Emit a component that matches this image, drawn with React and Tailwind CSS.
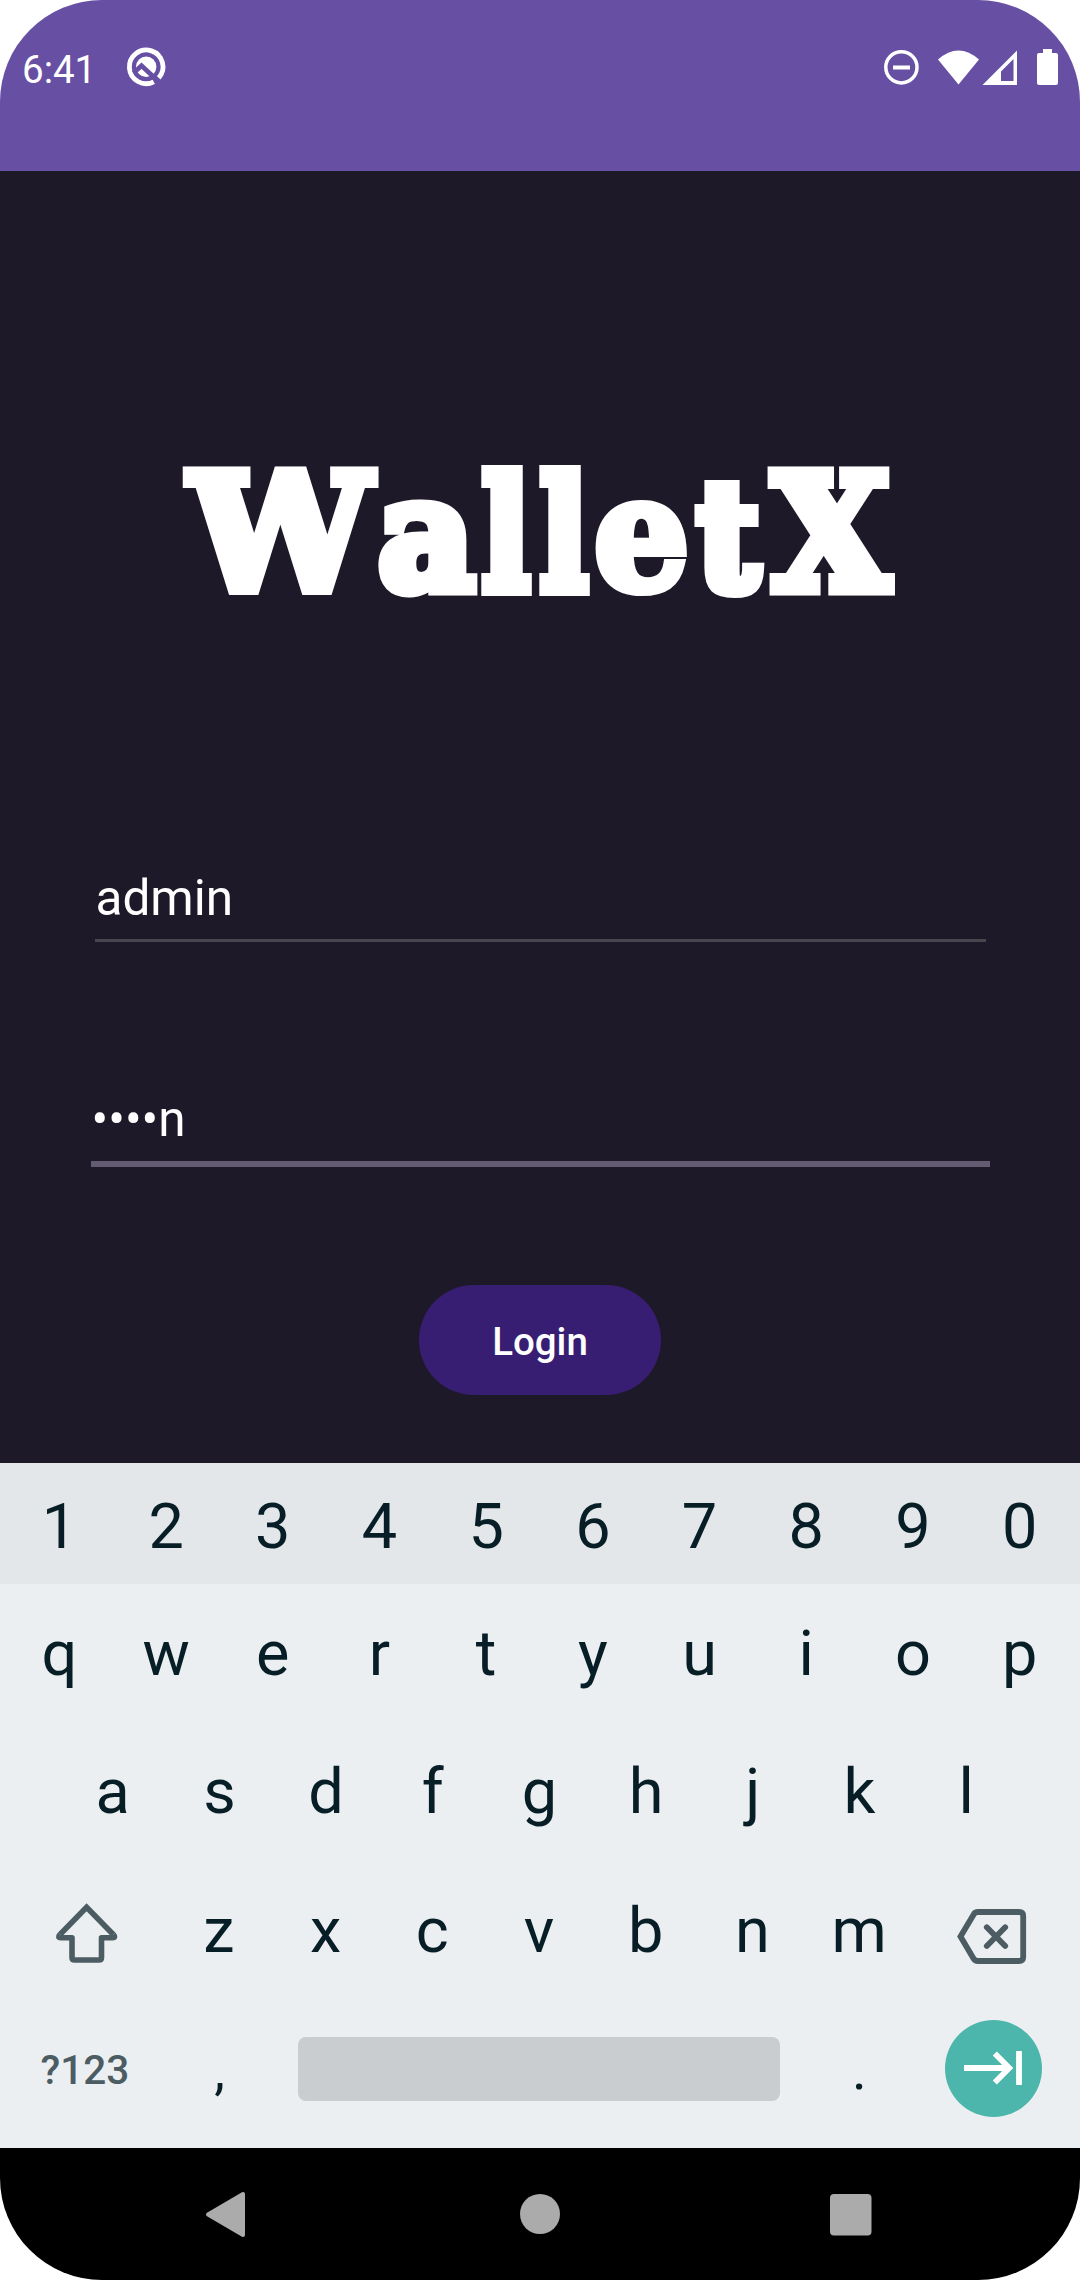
import React from "react";

const TITLE = [
  ["W", "w-[191px]", "text-[159px] [-webkit-text-stroke:12px_white] scale-x-[1.01]"],
  ["a", "w-[101px]", "text-[156px] [-webkit-text-stroke:13px_white] scale-x-[0.95]"],
  ["l", "w-[58px]", "text-[153px] [-webkit-text-stroke:14px_white] scale-x-[0.8]"],
  ["l", "w-[58px]", "text-[153px] [-webkit-text-stroke:14px_white] scale-x-[0.8]"],
  ["e", "w-[97px]", "text-[158px] [-webkit-text-stroke:10px_white] scale-x-[0.94]"],
  ["t", "w-[76px]", "text-[150px] [-webkit-text-stroke:14px_white] scale-x-[0.88]"],
  ["X", "w-[130px]", "text-[159px] [-webkit-text-stroke:13px_white] scale-x-[0.94]"],
];

function StatusBar() {
  return (
    <header className="flex h-[171px] items-start justify-between bg-[#6750a4] text-white">
      <div className="flex h-[139px] items-start">
        <span className="ml-[22px] mt-[47px] w-[98px] text-[38.5px] leading-[46px]">6:41</span>
        <svg className="mt-[40px] h-[54px] w-[54px]" viewBox="120 40 54 54" fill="none">
          <circle cx="146.2" cy="66.8" r="10.2" fill="white" />
          <path d="M153.800 81.800A16.800 16.800 0 1 1 158.800 77.900" stroke="white" strokeWidth="4.8" />
          <path d="M133.500 73L141.500 65.700L157 80" stroke="#6750a4" strokeWidth="4.600" />
        </svg>
      </div>
      <svg className="h-[100px] w-[200px]" viewBox="880 0 200 100" fill="white">
        <circle cx="901.4" cy="67.3" r="15.6" fill="none" stroke="white" strokeWidth="3.5" />
        <path d="M893 65.5h17v4h-17z" />
        <path d="M938 59.5Q958.5 41.5 979 59.5L958.5 84.5Z" />
        <path fillRule="evenodd" d="M982.5 85L1017 50.5V85ZM1001 81H1013.5V59L1001 71.5Z" />
        <path d="M1043 49h9v4h4a2 2 0 0 1 2 2v28a2 2 0 0 1-2 2h-17a2 2 0 0 1-2-2v-28a2 2 0 0 1 2-2h4z" />
      </svg>
    </header>
  );
}

function LoginForm() {
  return (
    <main className="flex h-[1292px] flex-col items-center bg-[#1e1928] text-white">
      <h1 className="mt-[267px] flex h-[190px] w-[711px] items-baseline leading-[190px] font-bold font-['DejaVu_Serif',serif]">
        {TITLE.map(([c, w, look], i) => (
          <span key={i} className={`${w} ${look} flex justify-center`}>{c}</span>
        ))}
      </h1>
      <div className="mt-[239px] h-[75px] w-[891px] border-b-[3px] border-[#49454f] pl-px text-[49.5px] leading-[62px]">
        admin
      </div>
      <div className="mt-[146px] h-[79px] w-[899px] border-b-[6px] border-[#625b71] pl-[1px] text-[49.5px] leading-[62px]">
        ••••n
      </div>
      <button className="mt-[118px] h-[110px] w-[242px] rounded-full bg-[#381e72] pt-[4px] text-[38.5px] font-medium">
        Login
      </button>
    </main>
  );
}

function Keys({ chars }) {
  return [...chars].map((c) => (
    <span key={c} className="w-[106.7px] text-center">{c}</span>
  ));
}

function Keyboard() {
  return (
    <section className="flex h-[685px] flex-col bg-[#eceff1] text-[63px] leading-[74px] text-[#071e26]">
      <div className="flex h-[121px] items-center justify-center bg-[#e4e7e9] pt-[7px] pr-px">
        <Keys chars="1234567890" />
      </div>
      <div className="flex h-[139px] items-center justify-center pr-px">
        <Keys chars="qwertyuiop" />
      </div>
      <div className="flex h-[138px] items-center justify-center pr-px">
        <Keys chars="asdfghjkl" />
      </div>
      <div className="flex h-[139px] items-center justify-center pr-[2px]">
        <svg className="h-[139px] w-[160px]" viewBox="5 1861 160 139" fill="none" stroke="#4c5c63" strokeWidth="5.6" strokeLinejoin="round">
          <path strokeLinejoin="miter" d="M59 1934.5L85.6 1907.3L112.3 1934.5" />
          <path d="M59 1934.5Q56 1937.7 60 1937.7H71V1957.5Q71 1960 73.5 1960H98Q100.500 1960 100.500 1957.500V1937.700H111.500Q115.300 1937.700 112.300 1934.500" />
        </svg>
        <Keys chars="zxcvbnm" />
        <svg className="h-[139px] w-[160px]" viewBox="913 1861 160 139" fill="none" stroke="#4c5c63" strokeWidth="5.8">
          <path d="M961.5 1936.500L974.500 1914.700Q976 1912 979 1912H1020Q1024.200 1912 1024.200 1916V1957Q1024.200 1961 1020 1961H979Q976 1961 974.500 1958.500Z" />
          <path strokeLinecap="round" d="M987.800 1927.300L1006.200 1946M1006.200 1927.300L987.800 1946" />
        </svg>
      </div>
      <div className="flex h-[138px] items-center">
        <span className="ml-[5px] w-[160px] pt-[2px] text-center text-[40.500px] font-medium text-[#4c5c63]">?123</span>
        <span className="w-[107px] pt-[3px] pl-[2px] text-center text-[54px]">,</span>
        <span className="ml-[26px] h-[64px] w-[482px] rounded-lg bg-[#c9cdd0]" />
        <span className="ml-[26px] w-[107px] pt-[2px] text-center text-[56px]">.</span>
        <span className="mb-[2px] ml-[32px] flex h-[97px] w-[97px] items-center justify-center rounded-full bg-[#4db6ac]">
          <svg className="h-[97px] w-[97px]" viewBox="945 2020 97 97" fill="none" stroke="white" strokeWidth="5.8">
            <path d="M964 2068H1010M994.800 2053.500L1009.200 2068L994.800 2082.500M1019 2051V2085" />
          </svg>
        </span>
      </div>
    </section>
  );
}

function NavBar() {
  return (
    <nav className="h-[132px] bg-black">
      <svg className="h-[132px] w-full" viewBox="0 2148 1080 132" fill="#ababab">
        <path stroke="#ababab" strokeWidth="4" strokeLinejoin="round" d="M208 2214.500L243 2194V2235Z" />
        <circle cx="540" cy="2214" r="20" />
        <rect x="830" y="2194" width="41.500" height="41.500" rx="4" />
      </svg>
    </nav>
  );
}

export default function App() {
  return (
    <div className="bg-white">
      <div className="h-[2280px] w-[1080px] overflow-hidden rounded-[102px] font-[Roboto,sans-serif]">
        <StatusBar />
        <LoginForm />
        <Keyboard />
        <NavBar />
      </div>
    </div>
  );
}
